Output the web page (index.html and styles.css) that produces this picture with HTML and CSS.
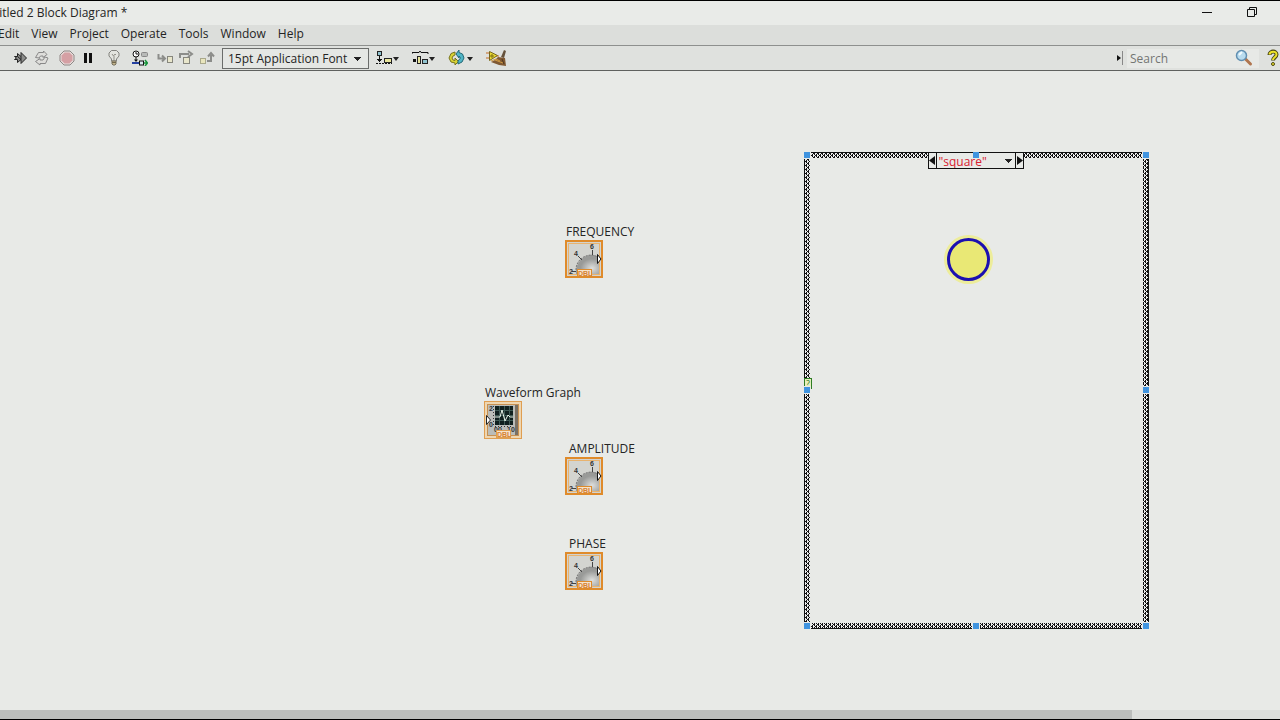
FILE: index.html
```html
<!DOCTYPE html>
<html lang="en">
<head>
<meta charset="utf-8">
<title>Block Diagram</title>
<link rel="stylesheet" href="styles.css">
</head>
<body>
<div class="window">
  <header class="titlebar">
    <h1 class="title">titled 2 Block Diagram *</h1>
    <div class="window-controls">
      <button aria-label="Minimize"><svg width="12" height="12"><path d="M1 5.500h10" stroke="#111"/></svg></button>
      <button aria-label="Restore"><svg width="12" height="12" fill="none" stroke="#111"><path d="M1.500 2.500h7v7h-7zM3.500 2V.500h7v7H9"/></svg></button>
    </div>
  </header>
  <nav class="menubar">
    <button>Edit</button><button>View</button><button>Project</button><button>Operate</button><button>Tools</button><button>Window</button><button>Help</button>
  </nav>
  <div class="toolbar">
    <div class="group">
      <button aria-label="Run"><svg width="16" height="16"><path d="M1.500 6.500h3v-3l3.500 3v-4l5.500 5.500-5.500 5.500v-4l-3.500 3v-3h-3l2-1.500z" fill="#8b8c8a" stroke="#242424"/><path d="M8 6.500v3M4.500 6.500L8 9.500" stroke="#242424"/></svg></button>
      <button aria-label="Run continuously"><svg width="16" height="16" fill="#dededb" stroke="#888"><path d="M1.500 7.500l3-5h5V1L13 4.500l-4 3V6H6.500l-1.500 2z"/><path d="M14 8l-2.500 5.500H6V15l-4.500-3.500 4.500-3V10h3l2-3z"/></svg></button>
    </div>
    <div class="group">
      <button aria-label="Abort"><svg width="16" height="16"><path d="M5 1h6l4 4v6l-4 4H5l-4-4V5z" fill="#e6dfdc" stroke="#8f8584"/><path d="M5.500 2.500h5l3 3v5l-3 3h-5l-3-3v-5z" fill="#d5a0a4"/></svg></button>
      <button aria-label="Pause"><svg width="16" height="16"><path d="M4 3h3v10H4zM9 3h3v10H9z" fill="#111"/></svg></button>
    </div>
    <div class="group">
      <button aria-label="Highlight execution"><svg width="18" height="18"><path d="M6.500 12V10L4 7V4l2.500-2.500h5L14 4v3l-2.500 3v2z" fill="#e3e4df" stroke="#83837f"/><path d="M7 5l1.500 2L10 5l1 1M9 7v5" fill="none" stroke="#92918a"/><path d="M7 12h4v3l-1 1H8l-1-1z" fill="#c4b58c" stroke="#77715e"/><path d="M7 13.500h4" stroke="#70664c"/></svg></button>
    </div>
    <div class="group">
      <button aria-label="Retain wire values"><svg width="16" height="16"><circle cx="4" cy="4" r="3" fill="#fff" stroke="#111"/><path d="M4 2v2h2M4 7v4" stroke="#111" fill="none"/><rect x="9.500" y="2.500" width="6" height="4" rx="1" fill="#b8bab8" stroke="#888"/><path d="M0 13h8" stroke="#2340a0" stroke-width="2"/><path d="M11 13h4M13 10l2.500 3-2.500 3" fill="none" stroke="#16933a" stroke-width="1.500"/><path d="M2 9.500h4L4 12z" fill="#111"/><rect x="7.500" y="11" width="4" height="4" fill="#dbe5ef" stroke="#111"/></svg></button>
    </div>
    <div class="group steps">
      <button aria-label="Step into"><svg width="16" height="16"><path d="M1.500 4v4.500H7M5 5.500l3 3-3 3" fill="none" stroke="#8c8d8a" stroke-width="2"/><rect x="10.500" y="6.500" width="5" height="6" fill="#e8e6cb" stroke="#86867d"/></svg></button>
      <button aria-label="Step over"><svg width="16" height="16"><path d="M2 8V4h9M10 1l4 3-4 3" fill="none" stroke="#8c8d8a" stroke-width="2"/><rect x="5.500" y="7.500" width="6" height="6" fill="#e8e6cb" stroke="#86867d"/></svg></button>
      <button aria-label="Step out"><svg width="16" height="16"><rect x="1.500" y="8.500" width="5" height="5" fill="#e9e6bd" stroke="#aaa98c"/><path d="M8 11h4V5M9 6.500L12 3l3 3.500" fill="none" stroke="#8c8d8a" stroke-width="2"/></svg></button>
    </div>
    <select class="font-select" aria-label="Font"><option>15pt Application Font</option></select>
    <div class="menus">
      <button aria-label="Align objects"><svg width="24" height="16"><rect x="1.500" y="1.500" width="4" height="4" fill="#8fc2ce" stroke="#222"/><rect x="8.500" y="8.500" width="7" height="4" fill="#e8e59a" stroke="#222"/><path d="M3.500 6v6M1 9.500h5M2 10.500h3" stroke="#111"/><path d="M0 13.500h16" stroke="#111" stroke-dasharray="2 1"/><path d="M17 7h6l-3 4z" fill="#222"/></svg></button>
      <button aria-label="Distribute objects"><svg width="24" height="16"><path d="M0 4V2.500h7L8 1l1 1.500h7V4" fill="none" stroke="#111"/><path d="M1 9h3v3H1z" fill="#111"/><rect x="5.500" y="6.500" width="3" height="7" fill="#e8e59a" stroke="#222"/><rect x="10.500" y="9.500" width="5" height="4" fill="#8fc2ce" stroke="#222"/><path d="M17 7h6l-3 4z" fill="#222"/></svg></button>
      <button aria-label="Reorder"><svg width="26" height="16"><path d="M7 2L3 3.500 1 8l2 4 4 1v2l3.500-3.500L7 8v2.500L5 10 4 8l1-2 2-1z" fill="#d8d334" stroke="#77741c"/><path d="M10 14l4-2 2-4-1.500-4L11 2.500V0L8 4l3 4V6l1.500 2L10 11z" fill="#50b5c6" stroke="#246976"/><path d="M19 7h6l-3 4z" fill="#222"/></svg></button>
      <button aria-label="Clean up diagram"><svg width="22" height="16"><path d="M0 3h4M0 8h4M9 6h4" stroke="#c46b22"/><path d="M3.500 1.500l8 4-8 5z" fill="#eadb35" stroke="#77661a"/><path d="M6 4v4M4 6h4" stroke="#7d6c14"/><path d="M18 0l2 1-2 7-3-1z" fill="#66523b"/><path d="M9 10l3-3 7 1 1 8-7-1-8-3z" fill="#805932"/><path d="M5 11l5-2 4 2M9 10l8 3" fill="none" stroke="#d19b43"/><path d="M16 9l2 5" stroke="#513720"/></svg></button>
    </div>
    <div class="search-area">
      <svg class="search-grip" width="7" height="14"><path d="M0 4l4 3-4 3z" fill="#111"/><path d="M5.500 0v14" stroke="#888"/></svg>
      <label class="search"><input type="text" placeholder="Search" aria-label="Search"><svg width="18" height="18"><path d="M10.500 10l5 5" stroke="#b07650" stroke-width="3" stroke-linecap="round"/><circle cx="6.500" cy="6.500" r="5" fill="#b9dcef" stroke="#608fb1" stroke-width="1.500"/><path d="M4 6l3-3" stroke="#f1fbff" stroke-width="2"/></svg></label>
      <button class="help" aria-label="Context help"><svg width="13" height="18"><path d="M2.500 6C2.500 1.500 9.500 1.500 9.500 5.500 9.500 8 6 8.500 6 11.500" fill="none" stroke="#4b4816" stroke-width="4"/><path d="M2.500 5.500C3 2 9.500 1.500 9.500 5.500 9.500 8 6 8.500 6 11" fill="none" stroke="#eee32b" stroke-width="2"/><circle cx="6" cy="15" r="1.500" fill="#eee32b" stroke="#4b4816"/></svg></button>
    </div>
  </div>
  <main class="canvas">
    <svg class="defs" width="0" height="0" aria-hidden="true">
      <defs>
        <radialGradient id="dial-fill" cx="70%" cy="70%"><stop offset="0" stop-color="#dedfdd"/><stop offset="1" stop-color="#999a98"/></radialGradient>
        <symbol id="dial" viewBox="0 0 38 38">
          <rect x="1" y="1" width="36" height="36" fill="#d3d4d0" stroke="#df8b2b" stroke-width="2"/>
          <rect x="3.500" y="3.500" width="31" height="31" fill="none" stroke="#e8b36f"/>
          <path d="M11 34c-1-10 6-19 16-19 3 0 5 1 7 2v17z" fill="url(#dial-fill)"/>
          <path d="M11 30c0-9 7-15 16-15l7 2" fill="none" stroke="#777" stroke-dasharray="2 1"/>
          <path d="M13 16l4 4M27.500 10v5M7 31.500h4" stroke="#444"/>
          <g class="dial-digits"><text x="9" y="16">4</text><text x="25" y="9">6</text><text x="4" y="34">2</text></g>
          <rect x="12.500" y="29.500" width="14" height="7" fill="#f5e4cb" stroke="#df8b2b"/>
          <text class="dial-type" x="13" y="36">DBL</text>
          <path d="M32.500 14.500v9l3.500-4.500z" fill="#fff" stroke="#111"/>
        </symbol>
        <pattern id="weave" width="4" height="4" patternUnits="userSpaceOnUse"><rect width="4" height="4" fill="#eee"/><path d="M0 0h2v1H0zM3 1h1v1H3zM1 1h1v1H1zM2 2h2v1H2zM1 3h1v1H1zM3 3h1v1H3z" fill="#111"/></pattern>
      </defs>
    </svg>
    <div class="node frequency"><span>FREQUENCY</span><svg width="38" height="38"><use href="#dial"/></svg></div>
    <div class="node graph"><span>Waveform Graph</span><svg width="38" height="38">
      <rect x=".500" y=".500" width="37" height="37" fill="#eed6b1" stroke="#df9e51"/>
      <rect x="3.500" y="3.500" width="31" height="31" fill="#bbbdb9" stroke="#c69051"/>
      <path d="M34 4v30h-3V4z" fill="#797064"/>
      <rect x="11" y="5" width="18" height="19" fill="#10201f"/>
      <path d="M15.500 5v19M20.500 5v19M25.500 5v19M11 9.500h18M11 14.500h18M11 19.500h18" stroke="#3f5a55"/>
      <path d="M11 16h5l2-7 3 11 3-6 2 2h3" fill="none" stroke="#e9f4eb"/>
      <path d="M9.500 5v20M11 25.500h18" stroke="#333" stroke-dasharray="1 2"/>
      <g class="dial-digits"><text x="5" y="10">2</text><text x="5" y="26">0</text><text x="10" y="31">00</text><text x="23" y="31">10</text></g>
      <rect x="12.500" y="29.500" width="14" height="7" fill="#f5e4cb" stroke="#df9e51"/>
      <text class="dial-type" x="13" y="36">DBL</text>
      <path d="M2.500 14.500v9l4-4.500z" fill="#fff" stroke="#222"/>
    </svg></div>
    <div class="node amplitude"><span>AMPLITUDE</span><svg width="38" height="38"><use href="#dial"/></svg></div>
    <div class="node phase"><span>PHASE</span><svg width="38" height="38"><use href="#dial"/></svg></div>
    <section class="case">
      <svg class="case-frame" width="100%" height="100%">
        <rect width="100%" height="5" fill="url(#weave)"/><rect width="5" height="100%" fill="url(#weave)"/>
        <svg x="100%" width="5" height="100%" overflow="visible"><rect x="-5" width="5" height="100%" fill="url(#weave)"/></svg>
        <svg y="100%" width="100%" height="5" overflow="visible"><rect y="-5" width="100%" height="5" fill="url(#weave)"/></svg>
      </svg>
      <div class="case-selector">
        <button aria-label="Previous case"><svg width="7" height="15"><path d="M6 3v9L0 7.500z" fill="#111"/></svg></button>
        <select aria-label="Case"><option>"square"</option></select>
        <button aria-label="Next case"><svg width="7" height="15"><path d="M1 3v9l6-4.500z" fill="#111"/></svg></button>
      </div>
      <span class="terminal">?</span>
      <i class="handle top left"></i><i class="handle top center"></i><i class="handle top right"></i>
      <i class="handle middle left"></i><i class="handle middle right"></i>
      <i class="handle bottom left"></i><i class="handle bottom center"></i><i class="handle bottom right"></i>
      <div class="pointer"></div>
    </section>
  </main>
  <div class="scrollbar"><div class="thumb"></div></div>
</div>
</body>
</html>
```
FILE: styles.css
```css
*, *::before { box-sizing: border-box; }
body { margin: 0; background: #e8eae7; color: #242424; font: 12px/16px "Open Sans", "Noto Sans", sans-serif; }
button, input, select { margin: 0; padding: 0; border: 0; background: none; color: inherit; font: inherit; }
svg { display: block; flex: none; }
.window { display: flex; flex-direction: column; min-height: 100vh; border-top: 1px solid #000; border-bottom: 1px solid #000; overflow: hidden; }
.titlebar { display: flex; justify-content: space-between; align-items: center; height: 24px; background: #e9ebe8; }
.title { margin: 0 0 0 -5px; font-size: 12px; font-weight: 400; }
.window-controls { display: flex; gap: 33px; padding-right: 22px; }
.menubar { display: flex; gap: 12px; height: 21px; margin-left: -2px; padding-bottom: 3px; background: #dcdedb; border-bottom: 1px solid #8e908e; }
.toolbar { display: flex; align-items: center; height: 25px; padding-left: 13px; background: #dfe1de; border-bottom: 1px solid #5f615f; }
.group { display: flex; gap: 5px; margin-right: 9px; }
.steps { margin-right: 7px; }
.font-select, .case-selector select {
  appearance: none;
  background-image: linear-gradient(-135deg, #222 50%, transparent 50%), linear-gradient(135deg, #222 50%, transparent 50%);
  background-repeat: no-repeat;
  background-size: 4px 4px;
}
.font-select { width: 147px; height: 21px; padding: 1px 5px 0; border: 1px solid #6b6d6b; background-color: #e5e7e4; background-position: right 10px top 8px, right 6px top 8px; }
.menus { display: flex; gap: 12px; margin-left: 7px; }
.search-area { display: flex; align-items: center; margin-left: auto; }
.search { display: flex; align-items: center; width: 132px; height: 19px; margin-left: 3px; padding: 0 6px 0 3px; background: #e7e9e6; }
.search input { flex: 1; min-width: 0; padding-top: 2px; outline: 0; }
.search input::placeholder { color: #737573; opacity: 1; }
.help { margin-left: 8px; }
.canvas { position: relative; flex: 1; min-height: 639px; }
.defs { position: absolute; }
.node { position: absolute; display: flex; flex-direction: column; white-space: nowrap; }
.node span { padding-left: 1px; }
.frequency { left: 565px; top: 153px; }
.graph { left: 484px; top: 314px; }
.amplitude { left: 565px; top: 370px; }
.phase { left: 565px; top: 465px; }
.amplitude span, .phase span { padding-left: 4px; }
.dial-digits { font: 700 7px "Liberation Sans", sans-serif; fill: #333; }
.dial-type { font: 700 7px "Liberation Sans", sans-serif; fill: #d68232; }
.case { position: absolute; left: 804px; top: 81px; width: 345px; height: 477px; border: 1px solid #111; }
.case-frame { position: absolute; inset: 0; }
.case-selector { position: absolute; left: 50%; top: -1px; display: flex; width: 96px; height: 17px; margin-left: -49px; background: #e8eae7; border: 1px solid #111; }
.case-selector select { flex: 1; min-width: 0; padding: 1px 2px 0; border: solid #111; border-width: 0 1px; color: #d8202f; background-position: right 6px top 6px, right 2px top 6px; }
.terminal { position: absolute; left: -1px; top: 225px; width: 8px; height: 11px; border: 1px solid #2f7d24; background: #e6f0bd; color: #2f7d24; font-size: 9px; line-height: 9px; text-align: center; }
.handle { position: absolute; width: 8px; height: 8px; border: 1px solid #e8eae7; background: #4094df; }
.top { top: -2px; }
.middle { top: 233px; }
.bottom { bottom: -2px; }
.left { left: -2px; }
.center { left: 167px; }
.right { right: -2px; }
.top.center { border-color: transparent; background-clip: padding-box; }
.pointer { position: absolute; left: 139px; top: 82px; width: 49px; height: 49px; padding: 3px; border-radius: 50%; background: #eded9a; }
.pointer::before { content: ""; display: block; height: 100%; border: 3px solid #1c10b0; border-radius: 50%; background: #e9e875; }
.scrollbar { display: flex; height: 9px; background: #dcdedb; }
.thumb { width: 88.4%; background: #bcbebc; }
```
